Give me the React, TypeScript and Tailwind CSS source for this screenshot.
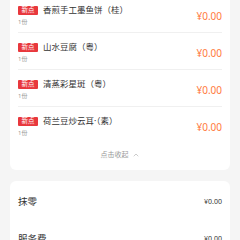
import { ChevronUp } from "lucide-react";

const items = [
 { name: "香煎手工墨鱼饼（桂）", qty: "1份", price: "¥0.00" },
 { name: "山水豆腐（粤）", qty: "1份", price: "¥0.00" },
 { name: "清蒸彩星斑（粤）", qty: "1份", price: "¥0.00" },
 { name: "荷兰豆炒云耳·（素）", qty: "1份", price: "¥0.00" },
];

const fees = [
 { label: "抹零", value: "¥0.00" },
 { label: "服务费", value: "¥0.00" },
];

export default function App() {
 return (
  <div
   className="h-[240px] w-[240px] overflow-hidden bg-[#f5f5f5] px-[10px]"
   style={{ fontFamily: '"Noto Sans", "Noto Sans CJK SC", sans-serif' }}
  >
   {/* Order items card, top is scrolled off */}
   <div className="-mt-[4px] rounded-b-[6px] bg-white px-[8px]">
    {items.map((item, i) => (
     <div
      key={item.name}
      className={`flex items-center justify-between pt-[10px] pb-[6px] ${
       i < items.length - 1 ? "border-b border-[#f0f0f0]" : ""
      }`}
     >
      <div className="flex flex-col gap-[3px]">
       <div className="flex h-[9px] items-center gap-[5px]">
        <span className="flex h-[9px] w-[20px] items-center justify-center rounded-[1px] bg-[#e8383d] text-[6.5px] leading-none text-white">
         新点
        </span>
        <span className="text-[8.5px] leading-none text-[#333333]">{item.name}</span>
       </div>
       <span className="h-[8px] text-[6px] leading-[8px] text-[#999999]">{item.qty}</span>
      </div>
      <span className="text-[10px] leading-none text-[#ff7a3d]">{item.price}</span>
     </div>
    ))}
    <div className="flex items-center justify-center gap-[3px] pt-[8px] pb-[11px] text-[7px] leading-[8px] text-[#999999]">
     <span>点击收起</span>
     <ChevronUp size={8} strokeWidth={1.5} />
    </div>
   </div>

   {/* Fees card */}
   <div className="mt-[11px] rounded-[6px] bg-white px-[8px] pt-[2px]">
    {fees.map((fee) => (
     <div key={fee.label} className="flex h-[37px] items-center justify-between">
      <span className="text-[9.5px] leading-none text-[#333333]">{fee.label}</span>
      <span className="text-[7px] leading-none text-[#333333]">{fee.value}</span>
     </div>
    ))}
   </div>
  </div>
 );
}
